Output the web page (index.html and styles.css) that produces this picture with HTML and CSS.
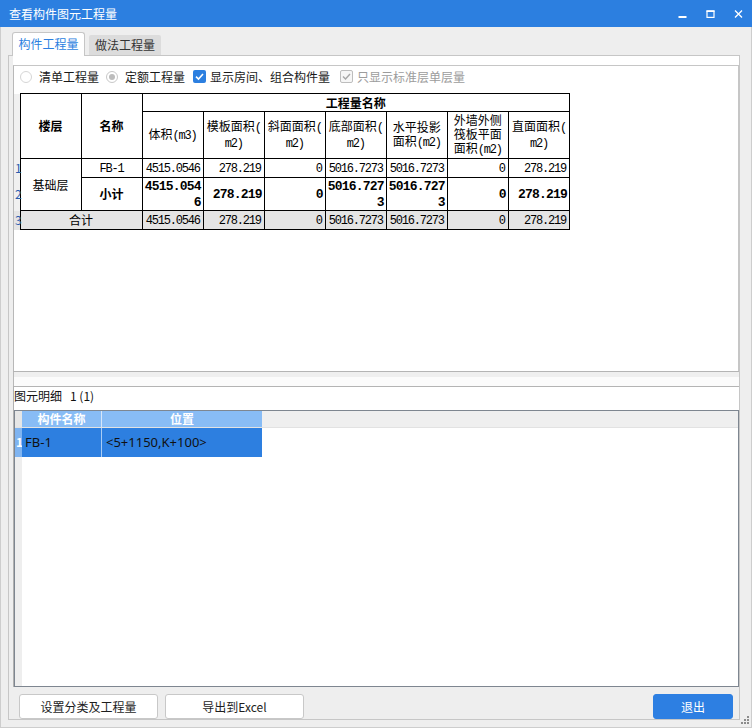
FILE: index.html
```html
<!DOCTYPE html>
<html lang="zh-CN">
<head>
<meta charset="utf-8">
<title>查看构件图元工程量</title>
<link rel="stylesheet" href="styles.css">
</head>
<body>
<div class="window">
  <div class="titlebar">
    <span class="title">查看构件图元工程量</span>
    <div class="controls">
      <svg class="ctl" width="9" height="8" viewBox="0 0 9 8"><rect x="0.5" y="6" width="8" height="2" fill="#fff"/></svg>
      <svg class="ctl" width="9" height="8" viewBox="0 0 9 8"><rect x="1" y="1" width="7" height="6.4" fill="none" stroke="#fff" stroke-width="1.2"/><rect x="0.5" y="0.4" width="8" height="1.6" fill="#fff"/></svg>
      <svg class="ctl" width="9" height="8" viewBox="0 0 9 8"><path d="M1 0.5 L8 7.5 M8 0.5 L1 7.5" stroke="#fff" stroke-width="1.3" fill="none"/></svg>
    </div>
  </div>
  <div class="client">
    <div class="tabs">
      <div class="tab active">构件工程量</div>
      <div class="tab">做法工程量</div>
    </div>
    <div class="pane">
      <div class="top-panel">
        <div class="group">
          <div class="options">
            <span class="radio"></span><span class="lbl l-radio">清单工程量</span>
            <span class="radio checked-dis r2"><span class="dot"></span></span><span class="lbl l-radio">定额工程量</span>
            <span class="check on c1"><svg width="11" height="11" viewBox="0 0 11 11"><path d="M2 5.6 L4.5 8 L9 3" fill="none" stroke="#fff" stroke-width="1.6"/></svg></span><span class="lbl l-check">显示房间、组合构件量</span>
            <span class="check dis c2"><svg width="11" height="11" viewBox="0 0 11 11"><path d="M2 5.6 L4.5 8 L9 3" fill="none" stroke="#a6a6a6" stroke-width="1.4"/></svg></span><span class="lbl l-check disabled">只显示标准层单层量</span>
          </div>
          <table class="qty">
            <colgroup>
              <col class="c-rh">
              <col class="c-d"><col class="c-d"><col class="c-d"><col class="c-d"><col class="c-d"><col class="c-d"><col class="c-d"><col class="c-d"><col class="c-d">
            </colgroup>
            <tr class="h1">
              <td class="rh"></td>
              <th rowspan="2">楼层</th>
              <th rowspan="2">名称</th>
              <th colspan="7">工程量名称</th>
            </tr>
            <tr class="h2">
              <td class="rh"></td>
              <td>体积<span class="n">(m3)</span></td>
              <td>模板面积<span class="n">(</span><br><span class="n">m2)</span></td>
              <td>斜面面积<span class="n">(</span><br><span class="n">m2)</span></td>
              <td>底部面积<span class="n">(</span><br><span class="n">m2)</span></td>
              <td>水平投影<br>面积<span class="n">(m2)</span></td>
              <td>外墙外侧<br>筏板平面<br>面积<span class="n">(m2)</span></td>
              <td>直面面积<span class="n">(</span><br><span class="n">m2)</span></td>
            </tr>
            <tr class="r1">
              <td class="rh">1</td>
              <td rowspan="2">基础层</td>
              <td><span class="n">FB-1</span></td>
              <td class="num"><span class="n">4515.0546</span></td>
              <td class="num"><span class="n">278.219</span></td>
              <td class="num"><span class="n">0</span></td>
              <td class="num"><span class="n">5016.7273</span></td>
              <td class="num"><span class="n">5016.7273</span></td>
              <td class="num"><span class="n">0</span></td>
              <td class="num"><span class="n">278.219</span></td>
            </tr>
            <tr class="r2">
              <td class="rh">2</td>
              <td class="b">小计</td>
              <td class="num"><span class="nb">4515.054<br>6</span></td>
              <td class="num"><span class="nb">278.219</span></td>
              <td class="num"><span class="nb">0</span></td>
              <td class="num"><span class="nb">5016.727<br>3</span></td>
              <td class="num"><span class="nb">5016.727<br>3</span></td>
              <td class="num"><span class="nb">0</span></td>
              <td class="num"><span class="nb">278.219</span></td>
            </tr>
            <tr class="r3">
              <td class="rh">3</td>
              <td colspan="2">合计</td>
              <td class="num"><span class="n">4515.0546</span></td>
              <td class="num"><span class="n">278.219</span></td>
              <td class="num"><span class="n">0</span></td>
              <td class="num"><span class="n">5016.7273</span></td>
              <td class="num"><span class="n">5016.7273</span></td>
              <td class="num"><span class="n">0</span></td>
              <td class="num"><span class="n">278.219</span></td>
            </tr>
          </table>
        </div>
      </div>
      <div class="splitter"></div>
      <div class="bottom-panel">
        <div class="detail-label">图元明细<span class="count">1 (1)</span></div>
        <div class="grid">
          <div class="grid-head">
            <div class="g-rh"></div>
            <div class="g-c1 gh">构件名称</div>
            <div class="g-c2 gh">位置</div>
          </div>
          <div class="grid-body">
            <div class="grid-row sel">
              <div class="g-rh">1</div>
              <div class="g-c1">FB-1</div>
              <div class="g-c2">&lt;5+1150,K+100&gt;</div>
            </div>
          </div>
        </div>
      </div>
      <div class="footer">
        <button class="btn btn-wide">设置分类及工程量</button>
        <button class="btn btn-wide">导出到Excel</button>
        <button class="btn btn-primary">退出</button>
      </div>
    </div>
  </div>
  <svg class="grip" width="8" height="8" viewBox="0 0 8 8">
    <rect x="6" y="0" width="2" height="2" fill="#8c8c8c"/>
    <rect x="3" y="3" width="2" height="2" fill="#8c8c8c"/>
    <rect x="6" y="3" width="2" height="2" fill="#8c8c8c"/>
    <rect x="0" y="6" width="2" height="2" fill="#8c8c8c"/>
    <rect x="3" y="6" width="2" height="2" fill="#8c8c8c"/>
    <rect x="6" y="6" width="2" height="2" fill="#8c8c8c"/>
  </svg>
</div>
</body>
</html>
```

FILE: styles.css
```css
* { box-sizing: border-box; }
html, body { margin: 0; padding: 0; }
body {
  width: 752px;
  height: 728px;
  overflow: hidden;
  background: #eeeeee;
  font-family: "Noto Sans CJK SC", "Noto Sans", sans-serif;
  font-size: 12px;
  color: #1e1e1e;
}
.window {
  position: relative;
  width: 752px;
  height: 728px;
  display: flex;
  flex-direction: column;
}
.titlebar {
  height: 27px;
  flex: none;
  background: #2c7fe0;
  color: #fff;
  display: flex;
  align-items: center;
  padding: 0 9px 0 9px;
}
.title { flex: 1; font-size: 12px; line-height: 27px; }
.controls { display: flex; align-items: center; gap: 19px; }
.ctl { display: block; }

.client {
  flex: 1;
  display: flex;
  flex-direction: column;
  padding: 5px 11px 7px 7px;
  border: 1px solid #cdcdcd;
  border-top: none;
}
.tabs {
  height: 23px;
  flex: none;
  display: flex;
  align-items: flex-end;
  padding-left: 4px;
  position: relative;
  z-index: 1;
}
.tab {
  height: 20px;
  width: 72px;
  margin-left: 4px;
  background: #dcdcdc;
  color: #333;
  border-radius: 2px 2px 0 0;
  text-align: center;
  line-height: 20px;
}
.tab.active {
  margin-left: 0;
  width: 73px;
  height: 24px;
  margin-bottom: -1px;
  background: #fff;
  color: #2c7fe0;
  border: 1px solid #c6c6c6;
  border-bottom: none;
  border-radius: 3px 3px 0 0;
  line-height: 22px;
}
.pane {
  height: 665px;
  flex: none;
  border: 1px solid #c6c6c6;
  background: #eeeeee;
  display: flex;
  flex-direction: column;
  padding-left: 4px;
}
.top-panel {
  height: 316px;
  flex: none;
  background: #fff;
  padding-top: 9px;
  border-bottom: 1px solid #b4b4b4;
}
.group {
  height: 100%;
  border: 1px solid #c6c6c6;
  border-bottom: none;
  border-left-color: #b8b8b8;
}
.options {
  height: 21px;
  display: flex;
  align-items: center;
  padding-left: 6px;
}
.radio {
  width: 12px;
  height: 12px;
  flex: none;
  border-radius: 50%;
  border: 1px solid #d6d6d6;
  background: #fff;
  display: flex;
  align-items: center;
  justify-content: center;
}
.radio.r2 { margin-left: 7px; border-color: #c8c8c8; }
.radio .dot { width: 6px; height: 6px; border-radius: 50%; background: #bcbcbc; }
.lbl { white-space: nowrap; line-height: 16px; color: #1a1a1a; }
.l-radio { margin-left: 7px; }
.l-check { margin-left: 4px; }
.lbl.disabled { color: #9c9c9c; }
.check {
  width: 13px;
  height: 13px;
  flex: none;
  border-radius: 2px;
  display: flex;
  align-items: center;
  justify-content: center;
}
.check svg { display: block; }
.check.on { background: #2c7fe0; margin-left: 8px; }
.check.dis { border: 1px solid #bdbdbd; background: #f6f6f6; margin-left: 10px; }

.qty {
  margin-top: 6px;
  border-collapse: collapse;
  table-layout: fixed;
  width: 556px;
  font-size: 12px;
  color: #000;
}
.c-rh { width: 6px; }
.c-d { width: 61px; }
.qty th, .qty td {
  border: 1px solid #000;
  padding: 0 2px;
  text-align: center;
  vertical-align: middle;
  line-height: 14px;
  white-space: nowrap;
  overflow: hidden;
}
.qty th { font-weight: bold; }
.qty td.rh {
  border: none;
  padding: 0 0 0 1px;
  background: #f0f0f0;
  color: #2a5cae;
  text-align: left;
  font-size: 12px;
  overflow: visible;
}
.qty .h1 { height: 18px; }
.qty .h2 { height: 47px; }
.qty .r1 { height: 19px; }
.qty .r2 { height: 33px; }
.qty .r3 { height: 19px; }
.qty .r3 td { background: #e4e4e4; }
.qty td.num { text-align: right; padding-right: 3px; }
.qty .r2 td.num { padding-right: 2px; }
.qty td.b { font-weight: bold; }
.n {
  font-family: "Liberation Mono", monospace;
  font-size: 12px;
  letter-spacing: -1.2px;
}
.nb {
  font-family: "Liberation Mono", monospace;
  font-size: 13px;
  font-weight: bold;
  letter-spacing: -0.8px;
  line-height: 14px;
}

.splitter {
  height: 14px;
  flex: none;
  background: linear-gradient(#efefef 0, #efefef 5px, #fbfbfb 5px);
  border-left: 1px solid #b8b8b8;
}
.bottom-panel {
  height: 301px;
  flex: none;
  background: #fff;
  border-top: 1px solid #b4b4b4;
  border-left: 1px solid #b0b0b0;
  display: flex;
  flex-direction: column;
}
.detail-label {
  height: 23px;
  flex: none;
  line-height: 18px;
  color: #111;
}
.count { margin-left: 8px; }
.grid {
  flex: 1;
  border: 1px solid #7e8690;
  display: flex;
  flex-direction: column;
  background: #fff;
}
.grid-head {
  height: 17px;
  flex: none;
  display: flex;
  background: #efefef;
  border-bottom: 1px solid #e2e2e2;
}
.g-rh { width: 7px; flex: none; }
.grid-head .g-rh { background: #e6e6e6; }
.g-c1 { width: 80px; flex: none; border-right: 1px solid #d6e6fa; }
.g-c2 { width: 160px; flex: none; }
.gh {
  background: #88bcf5;
  color: #fff;
  font-weight: bold;
  text-align: center;
  line-height: 16px;
}
.grid-body {
  flex: 1;
  background: linear-gradient(to right, #eeeeee 0, #eeeeee 7px, #fff 7px);
}
.grid-row {
  height: 29px;
  display: flex;
  line-height: 28px;
}
.grid-row.sel .g-rh {
  background: #7fb4f1;
  color: #fff;
  font-weight: bold;
  padding-left: 1px;
}
.grid-row.sel .g-c1, .grid-row.sel .g-c2 {
  background: #2d7fe0;
  color: #111;
  font-family: "Noto Sans", "Noto Sans CJK SC", sans-serif;
  font-size: 13px;
}
.grid-row.sel .g-c1 { padding-left: 3px; border-right-color: #a9ccf4; }
.grid-row.sel .g-c2 { padding-left: 4px; }

.footer {
  height: 32px;
  flex: none;
  display: flex;
  align-items: flex-end;
  padding-bottom: 0;
}
.btn {
  height: 25px;
  border: 1px solid #c8c8c8;
  border-radius: 3px;
  background: #fff;
  color: #1e1e1e;
  font-family: "Noto Sans CJK SC", "Noto Sans", sans-serif;
  font-size: 12px;
  padding: 0;
  line-height: 22px;
}
.btn-wide { width: 139px; margin-left: 7px; }
.btn-wide:first-child { margin-left: 6px; }
.btn-primary {
  width: 80px;
  margin-left: auto;
  margin-right: 6px;
  background: #2d7fe2;
  border-color: #2d7fe2;
  color: #fff;
}
.grip { position: absolute; right: 3px; bottom: 4px; }
```
